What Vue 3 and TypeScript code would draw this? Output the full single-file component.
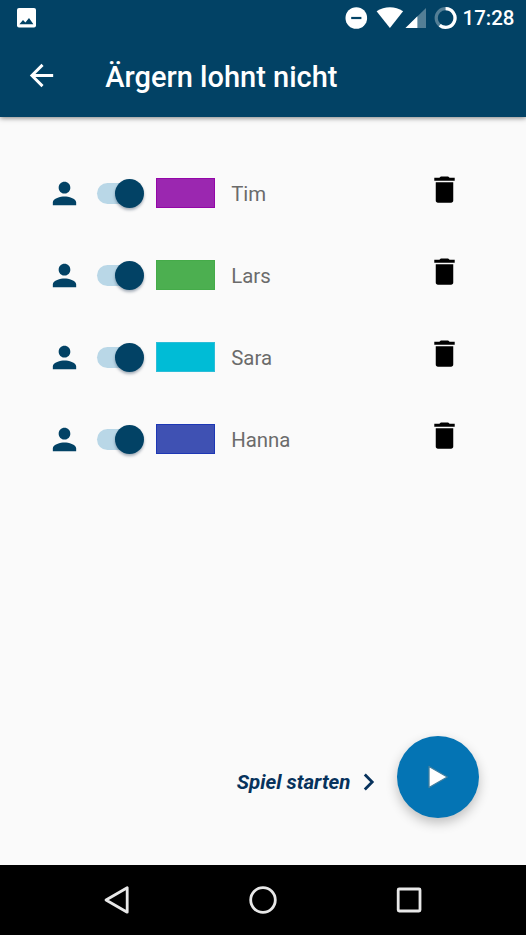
<script setup lang="ts">
interface Player {
  name: string
  color: string
  border: string
}

const players: Player[] = [
  { name: 'Tim', color: '#9b27b0', border: '#9406a8' },
  { name: 'Lars', color: '#4caf50', border: '#45ab49' },
  { name: 'Sara', color: '#00bcd6', border: '#2cbdd8' },
  { name: 'Hanna', color: '#3f51b3', border: '#1d37b4' },
]
</script>

<template>
  <div class="screen">
    <header class="top">
      <div class="status">
        <svg class="picture" viewBox="0 0 20 20">
          <rect width="19" height="19.4" rx="2" fill="#fff" />
          <path d="M2.4 16.2 6 12l2.4 2.6 3.6-4.5 4.4 6.1z" fill="#024265" />
        </svg>
        <svg class="indicators" viewBox="0 0 114 24">
          <circle cx="11.3" cy="12" r="10.8" fill="#fff" />
          <path d="M6.2 12h10.2" stroke="#024265" stroke-width="2.2" />
          <path d="M31.6 5.3C39.6-.1 50.2-.1 58.1 5.3L44.9 22z" fill="#fff" />
          <path d="M81 2v20H60.5z" fill="#547f96" />
          <path d="M72.4 10.3V22H60.5z" fill="#fff" />
          <circle cx="100.6" cy="12" r="9.4" fill="none" stroke="#547f96" stroke-width="3.2" />
          <path d="M100.6 2.6a9.4 9.4 0 1 1-5.9 16.7" fill="none" stroke="#fff" stroke-width="3.2" />
        </svg>
        <span class="clock">17:28</span>
      </div>
      <div class="toolbar">
        <svg class="back" viewBox="0 0 24 24">
          <path d="M20 11H7.83l5.59-5.59L12 4l-8 8 8 8 1.41-1.41L7.83 13H20z" fill="#fff" />
        </svg>
        <h1>Ärgern lohnt nicht</h1>
      </div>
    </header>

    <main>
      <ul class="players">
        <li v-for="player in players" :key="player.name">
          <svg class="person" viewBox="0 0 24 24">
            <path d="M12 12c2.21 0 4-1.79 4-4s-1.79-4-4-4-4 1.79-4 4 1.79 4 4 4zm0 2c-2.67 0-8 1.34-8 4v2h16v-2c0-2.66-5.33-4-8-4z" />
          </svg>
          <span class="switch"><span class="thumb"></span></span>
          <span class="swatch" :style="{ background: player.color, borderColor: player.border }"></span>
          <span class="name">{{ player.name }}</span>
          <svg class="trash" viewBox="0 0 24 24">
            <path d="M6 19.5c0 .9.6 1.5 1.5 1.5h9c.9 0 1.5-.6 1.5-1.5V7H6v12.5zM19 4h-3.5l-1-1h-5l-1 1H5v2h14V4z" />
          </svg>
        </li>
      </ul>
      <div class="start">
        <span class="label">Spiel starten</span>
        <svg class="chevron" viewBox="0 0 12 18">
          <path d="M1.8 1.5 9.2 9l-7.4 7.5" fill="none" stroke="#07325c" stroke-width="2.8" />
        </svg>
        <button class="fab" aria-label="Spiel starten">
          <svg viewBox="0 0 22 24">
            <path d="M2 1.5 20.3 12 2 22.5z" fill="#fff" stroke="#407f9f" stroke-width="1.3" stroke-linejoin="round" />
          </svg>
        </button>
      </div>
    </main>

    <nav>
      <svg viewBox="0 0 32 32"><path d="M26.2 3.8v24.4L5 16z" /></svg>
      <svg viewBox="0 0 32 32"><circle cx="16" cy="16" r="12.3" /></svg>
      <svg viewBox="0 0 32 32"><rect x="5.2" y="5" width="21.8" height="22" rx="1" /></svg>
    </nav>
  </div>
</template>

<style>
body {
  margin: 0;
}
</style>

<style scoped>
.screen {
  width: 526px;
  height: 935px;
  display: flex;
  flex-direction: column;
  overflow: hidden;
  background: #fafafa;
  font-family: Roboto, sans-serif;
}
.top {
  height: 116.5px;
  flex: none;
  background: #024265;
  color: #fff;
  box-shadow: 0 1px 5px rgba(0, 0, 0, 0.5);
}
.status {
  height: 35px;
  display: flex;
  align-items: center;
  padding: 0 12.5px 0 17px;
}
.picture {
  width: 20px;
  height: 20px;
}
.indicators {
  width: 114px;
  height: 24px;
  margin-left: auto;
}
.clock {
  width: 51px;
  margin-left: 4px;
  font-size: 20.5px;
  font-weight: 500;
  line-height: 24px;
  padding-top: 1px;
}
.toolbar {
  height: 82px;
  display: flex;
  align-items: center;
  padding-left: 23.5px;
}
.back {
  width: 35px;
  height: 35px;
  margin-bottom: 1px;
}
h1 {
  margin: 2px 0 0 46.8px;
  font-size: 29px;
  line-height: 36px;
  font-weight: 500;
  white-space: nowrap;
}
main {
  flex: 1;
  display: flex;
  flex-direction: column;
  justify-content: space-between;
}
.players {
  list-style: none;
  margin: 0;
  padding: 35.5px 64.5px 0 47px;
}
.players li {
  height: 81.9px;
  display: flex;
  align-items: center;
}
.person {
  width: 35px;
  height: 35px;
  margin-top: 1px;
  fill: #024265;
}
.switch {
  width: 43px;
  height: 21px;
  margin: 1.5px 0 0 15px;
  border-radius: 11px;
  background: #b9d7e7;
  display: flex;
  align-items: center;
}
.thumb {
  flex: none;
  width: 29px;
  height: 29px;
  margin-left: 17.8px;
  border-radius: 50%;
  background: #024265;
  box-shadow: 0 2px 3px rgba(0, 30, 60, 0.35);
}
.swatch {
  box-sizing: border-box;
  width: 59px;
  height: 30px;
  margin-left: 16px;
  border: 1px solid;
}
.name {
  margin-left: 16.2px;
  padding-top: 2px;
  font-size: 20.4px;
  line-height: 24px;
  color: #6b6b6b;
}
.trash {
  width: 35px;
  height: 35px;
  margin: 0 0 6px auto;
  fill: #000;
}
.start {
  display: flex;
  align-items: center;
  justify-content: flex-end;
  padding: 0 47px 47px 0;
}
.label {
  padding-top: 10px;
  font-size: 20.5px;
  line-height: 24px;
  font-weight: 700;
  font-style: italic;
  color: #07325c;
}
.chevron {
  width: 12px;
  height: 18px;
  margin: 9px 22px 0 12.5px;
}
.fab {
  width: 82px;
  height: 82px;
  padding: 0;
  border: 0;
  border-radius: 50%;
  background: #0474b4;
  display: flex;
  align-items: center;
  justify-content: center;
  box-shadow: 0 5px 12px rgba(0, 0, 0, 0.24);
}
.fab svg {
  width: 22px;
  height: 24px;
}
nav {
  height: 70px;
  flex: none;
  background: #000;
  display: flex;
  align-items: center;
  justify-content: center;
  gap: 114px;
}
nav svg {
  width: 32px;
  height: 32px;
  fill: none;
  stroke: #e8e8e8;
  stroke-width: 2.8;
  stroke-linejoin: round;
}
</style>
